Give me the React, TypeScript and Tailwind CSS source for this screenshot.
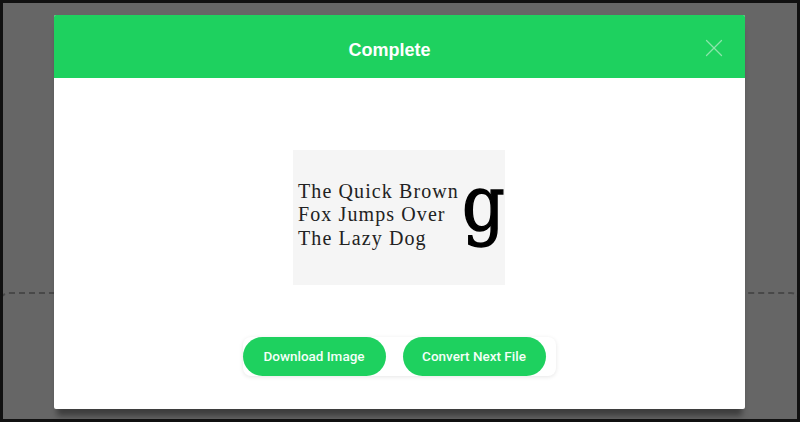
import { X } from 'lucide-react';

const sans = { fontFamily: 'Roboto, "Liberation Sans", sans-serif' };

export default function App() {
  return (
    <div className="relative h-[422px] w-[800px] overflow-hidden bg-[#111111]" style={sans}>
      {/* dimmed page behind the dialog */}
      <div className="ml-[3px] mt-[3px] h-[416px] w-[794px] overflow-hidden bg-[#666666]">
        <div className="ml-[-4px] mt-[289px] h-[160px] w-[802px] rounded-t-[10px] border-2 border-dashed border-[#484848]" />
      </div>

      {/* dialog */}
      <div className="absolute left-[54px] top-[15px] flex h-[394px] w-[691px] flex-col overflow-hidden rounded-[2px] bg-white shadow-[0_10px_6px_-3px_rgba(0,0,0,0.4)]">
        <div className="relative flex h-[63px] shrink-0 items-center justify-center bg-[#1ed15f] pr-[20px] pt-[6px]">
          <h2 className="text-[18px] font-bold leading-none text-white" style={{ fontFamily: '"Liberation Sans", sans-serif' }}>
            Complete
          </h2>
          <X className="absolute right-[16px] top-[18px] h-[30px] w-[30px] text-[#8be5ab]" strokeWidth={1} absoluteStrokeWidth />
        </div>

        <div className="flex flex-1 flex-col items-center pt-[72px]">
          <div className="ml-[-1px] flex h-[135px] w-[212px] items-center bg-[#f5f5f5] pl-[5px] blur-[0.3px]">
            <div className="mt-[-5px] w-[163px] text-[20px] leading-[23.5px] tracking-[1.1px] text-[#222222]" style={{ fontFamily: '"Liberation Serif", serif' }}>
              <div className="whitespace-nowrap">The Quick Brown</div>
              <div className="whitespace-nowrap">Fox Jumps Over</div>
              <div className="whitespace-nowrap">The Lazy Dog</div>
            </div>
            <span
              className="ml-[3px] mt-[-27px] inline-block origin-left scale-x-[0.88] text-[76px] leading-none text-black [-webkit-text-stroke:1.5px_black]"
              style={{ fontFamily: '"DejaVu Serif", serif' }}
            >
              g
            </span>
          </div>

          <div className="mt-[52px] ml-[-1px] flex gap-[17px] rounded-[8px] pr-[10px] shadow-[0_1px_4px_rgba(0,0,0,0.1)]">
            <button className="h-[39px] w-[143px] rounded-full bg-[#1ed15f] text-[13.5px] font-medium text-[#f4fff8]">
              Download Image
            </button>
            <button className="h-[39px] w-[143px] rounded-full bg-[#1ed15f] text-[13.5px] font-medium text-[#f4fff8]">
              Convert Next File
            </button>
          </div>
        </div>
      </div>
    </div>
  );
}
